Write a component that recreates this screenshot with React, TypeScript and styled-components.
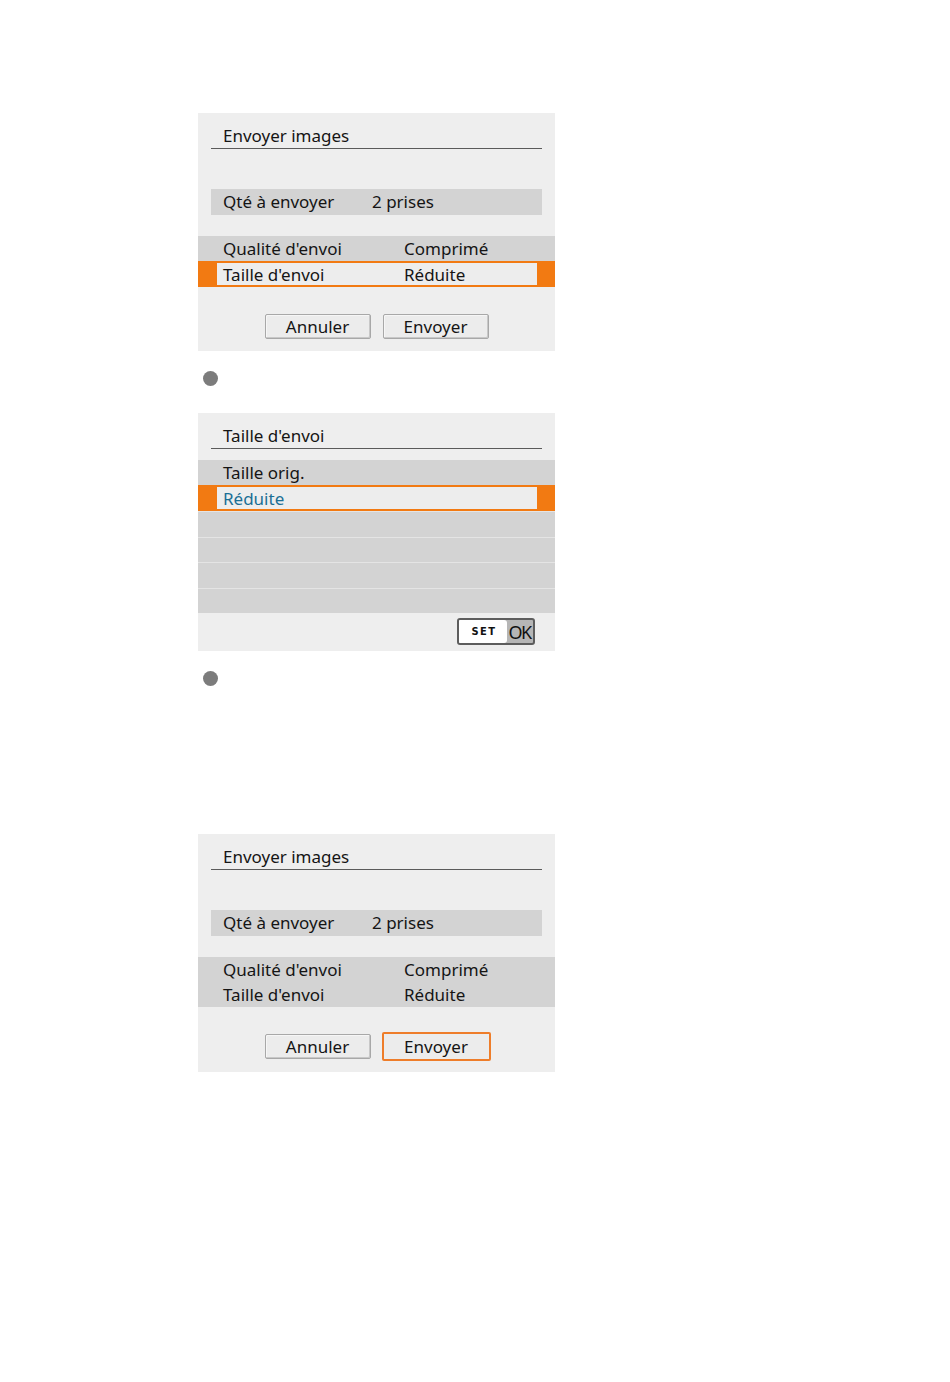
import React from "react";
import styled, { createGlobalStyle } from "styled-components";

const Global = createGlobalStyle`
  html, body { margin: 0; padding: 0; background: #ffffff; }
  body { font-family: "Noto Sans", "Open Sans", sans-serif; color: #151515; }
`;

const Page = styled.div`
  width: 950px;
  height: 1382px;
  box-sizing: border-box;
  padding: 113px 0 0 198px;
  display: flex;
  flex-direction: column;
`;

const Panel = styled.div`
  width: 357px;
  height: 238px;
  background: #eeeeee;
  display: flex;
  flex-direction: column;
  font-size: 17px;
`;

const Header = styled.div`
  margin: 0 13px;
  height: 36px;
  border-bottom: 1px solid #5a5a5a;
  display: flex;
  align-items: flex-end;
  padding: 0 0 1px 12px;
  box-sizing: border-box;
  line-height: 22px;
`;

const QtyRow = styled.div`
  margin: 40px 13px 0;
  height: 26px;
  background: #d3d3d3;
  display: grid;
  grid-template-columns: 149px 1fr;
  align-items: center;
  padding-left: 12px;
  line-height: 22px;
`;

const SettingsList = styled.div`
  margin-top: 21px;
  display: flex;
  flex-direction: column;
`;

const Row = styled.div<{ $selected?: boolean; $h?: number }>`
  height: ${(p) => p.$h ?? 25}px;
  background: ${(p) => (p.$selected ? "#f27a12" : "#d3d3d3")};
  display: flex;
  align-items: stretch;
  padding: ${(p) => (p.$selected ? "2px 18px 2px 19px" : "0")};
  box-sizing: border-box;
`;

const RowInner = styled.div<{ $selected?: boolean; $cols?: boolean; $blue?: boolean }>`
  flex: 1;
  display: ${(p) => (p.$cols ? "grid" : "flex")};
  grid-template-columns: 181px 1fr;
  align-items: center;
  background: ${(p) => (p.$selected ? "#ededed" : "transparent")};
  padding-left: ${(p) => (p.$selected ? "6px" : "25px")};
  padding-top: 1px;
  line-height: 22px;
  color: ${(p) => (p.$blue ? "#1a6f95" : "#151515")};
`;

const EmptyRow = styled.div`
  height: 25.5px;
  background: #d3d3d3;
  border-top: 1px solid #e4e4e4;
  box-sizing: border-box;
`;

const ButtonBar = styled.div`
  margin-top: 27px;
  display: flex;
  justify-content: center;
  align-items: flex-start;
  gap: 12px;
`;

const Btn = styled.div<{ $active?: boolean }>`
  width: ${(p) => (p.$active ? "109px" : "106px")};
  height: ${(p) => (p.$active ? "29px" : "25px")};
  margin: ${(p) => (p.$active ? "-2px -2px -2px -1px" : "0")};
  box-sizing: border-box;
  border: ${(p) => (p.$active ? "2px solid #ee7d2a" : "1px solid #a8a8a8")};
  border-radius: 2px;
  background: #ececec;
  box-shadow: ${(p) => (p.$active ? "none" : "inset -1px -1px 0 #c8c8c8, inset 1px 1px 0 #f6f6f6")};
  display: flex;
  align-items: center;
  justify-content: center;
  line-height: 22px;
`;

const Bullet = styled.div<{ $mt: number; $mb: number }>`
  width: 15px;
  height: 15px;
  border-radius: 50%;
  background: #7c7c7c;
  margin: ${(p) => `${p.$mt}px 0 ${p.$mb}px 5px`};
`;

const SelectList = styled.div`
  margin-top: 11px;
  display: flex;
  flex-direction: column;
`;

const Footer = styled.div`
  flex: 1;
  display: flex;
  justify-content: flex-end;
  align-items: flex-start;
  padding: 5px 20px 0 0;
`;

const SetOk = styled.div`
  width: 78px;
  height: 27px;
  box-sizing: border-box;
  border: 2px solid #5d5d5d;
  border-radius: 3px;
  display: flex;
  overflow: hidden;
  background: #b6b6b6;
`;

const SetPart = styled.div`
  width: 46px;
  background: #ffffff;
  border-radius: 0 3px 3px 0;
  display: flex;
  align-items: center;
  justify-content: center;
  font-family: "DejaVu Sans Condensed", "DejaVu Sans", sans-serif;
  font-weight: 600;
  font-size: 11px;
  letter-spacing: 1.5px;
  color: #111;
  padding-left: 2px;
`;

const OkPart = styled.div`
  flex: 1;
  display: flex;
  align-items: center;
  justify-content: center;
  font-size: 18px;
  color: #111;
  letter-spacing: -1.5px;
  padding-right: 1px;
`;

const SendDialog = ({ selected, activeSend }: { selected: boolean; activeSend: boolean }) => (
  <Panel>
    <Header>Envoyer images</Header>
    <QtyRow>
      <span>Qté à envoyer</span>
      <span>2 prises</span>
    </QtyRow>
    <SettingsList>
      <Row>
        <RowInner $cols>
          <span>Qualité d'envoi</span>
          <span>Comprimé</span>
        </RowInner>
      </Row>
      <Row $selected={selected} $h={selected ? 26 : 25}>
        <RowInner $cols $selected={selected}>
          <span>Taille d'envoi</span>
          <span>Réduite</span>
        </RowInner>
      </Row>
    </SettingsList>
    <ButtonBar>
      <Btn>Annuler</Btn>
      <Btn $active={activeSend}>Envoyer</Btn>
    </ButtonBar>
  </Panel>
);

export default function App() {
  return (
    <>
      <Global />
      <Page>
        <SendDialog selected activeSend={false} />
        <Bullet $mt={20} $mb={27} />
        <Panel>
          <Header>Taille d'envoi</Header>
          <SelectList>
            <Row>
              <RowInner>Taille orig.</RowInner>
            </Row>
            <Row $selected $h={26}>
              <RowInner $selected $blue>Réduite</RowInner>
            </Row>
            <EmptyRow />
            <EmptyRow />
            <EmptyRow />
            <EmptyRow />
          </SelectList>
          <Footer>
            <SetOk>
              <SetPart>SET</SetPart>
              <OkPart>OK</OkPart>
            </SetOk>
          </Footer>
        </Panel>
        <Bullet $mt={20} $mb={148} />
        <SendDialog selected={false} activeSend />
      </Page>
    </>
  );
}
